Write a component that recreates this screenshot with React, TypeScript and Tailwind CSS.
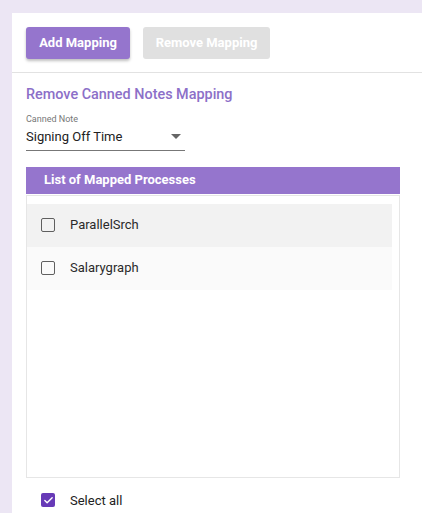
import { Check } from 'lucide-react';

function Box({ checked }: { checked?: boolean }) {
  return checked ? (
    <span className="flex h-[14px] w-[14px] shrink-0 items-center justify-center rounded-[2px] bg-[#673ab7]">
      <Check className="h-[11px] w-[11px] text-white" strokeWidth={3} />
    </span>
  ) : (
    <span className="block h-[14px] w-[14px] shrink-0 rounded-[2px] border-[1.5px] border-[#5f5f5f]" />
  );
}

function Row({ label, shade }: { label: string; shade: string }) {
  return (
    <div className={`flex h-[43px] items-center ${shade}`}>
      <div className="ml-[14px]">
        <Box />
      </div>
      <span className="ml-[15px] text-[13px] text-[#2a2a2a]">{label}</span>
    </div>
  );
}

export default function App() {
  return (
    <div
      className="h-[513px] w-[422px] overflow-hidden bg-[#ece6f4] pl-[12px] pt-[13px]"
      style={{ fontFamily: 'Roboto, "Liberation Sans", sans-serif' }}
    >
      <div className="h-full bg-white">
        <div className="flex gap-[13px] px-[14px] pt-[14px] pb-[13px]">
          <button className="h-[32px] w-[104px] rounded-[3px] bg-[#9575cd] text-[13px] font-bold text-white shadow-[0_2px_3px_rgba(0,0,0,0.25)]">
            Add Mapping
          </button>
          <button className="h-[32px] w-[127px] rounded-[3px] bg-[#e0e0e0] text-[13px] font-bold text-white">
            Remove Mapping
          </button>
        </div>
        <div className="h-px bg-[#e2e2e2]" />
        <div className="px-[14px]">
          <div className="pt-[11px] text-[14.4px] font-medium text-[#8c6fc8]">Remove Canned Notes Mapping</div>
          <div className="mt-[7px] text-[9px] text-[#777]">Canned Note</div>
          <div className="flex w-[159px] items-center justify-between border-b border-[#777] pb-[3px] pt-[1px]">
            <span className="text-[13px] text-[#222]">Signing Off Time</span>
            <span className="mr-[4px] h-0 w-0 border-x-[5px] border-t-[5px] border-x-transparent border-t-[#666]" />
          </div>
          <div className="mr-[8px] mt-[16px]">
            <div className="flex h-[27px] items-center bg-[#9575cd] pl-[18px] text-[13px] font-bold text-white">
              List of Mapped Processes
            </div>
            <div className="mt-px h-[283px] border border-[#e6e6e6] pr-[7px] pt-[8px]">
              <Row label="ParallelSrch" shade="bg-[#f2f2f2]" />
              <Row label="Salarygraph" shade="bg-[#fafafa]" />
            </div>
          </div>
          <div className="mt-[13px] flex items-center">
            <div className="ml-[15px]">
              <Box checked />
            </div>
            <span className="ml-[15px] text-[13px] text-[#222]">Select all</span>
          </div>
        </div>
      </div>
    </div>
  );
}
